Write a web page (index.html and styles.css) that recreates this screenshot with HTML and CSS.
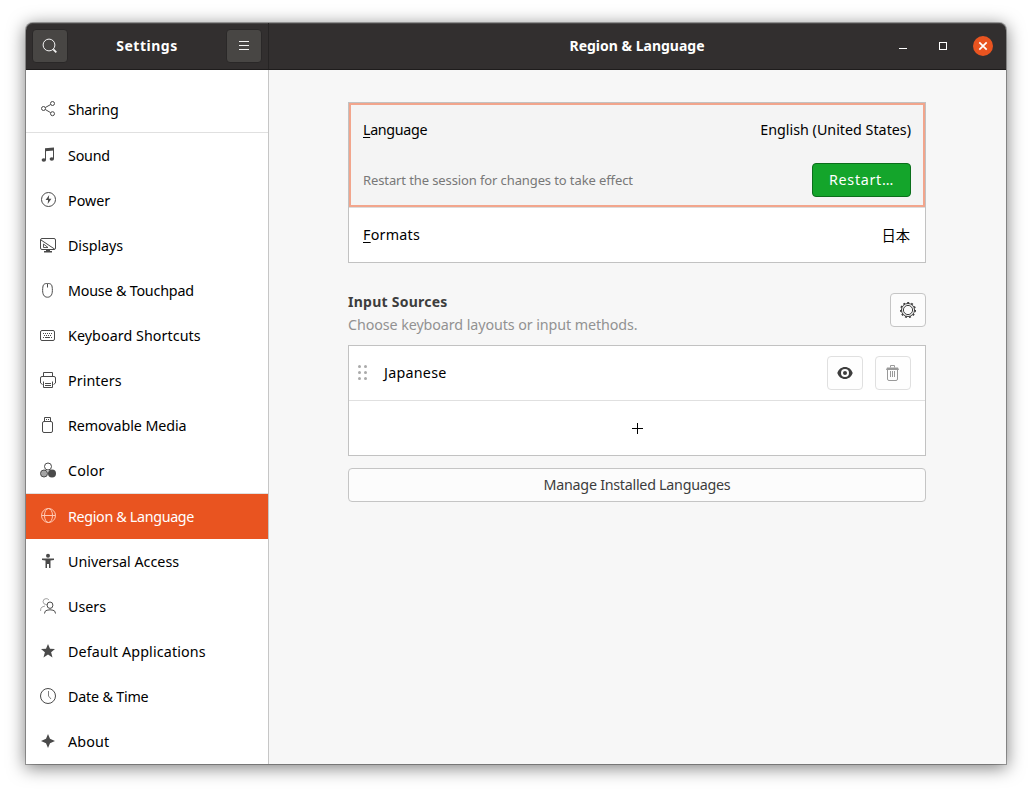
FILE: index.html
```html
<!DOCTYPE html>
<html lang="en">
<head>
<meta charset="utf-8">
<title>Settings</title>
<link rel="stylesheet" href="styles.css">
</head>
<body>
<div class="window">
  <header class="titlebar">
    <div class="titlebar-side">
      <button class="hbtn" aria-label="Search"><svg width="16" height="16" viewBox="0 0 16 16"><circle cx="7" cy="7" r="5.9"/><path d="M11.3 11.3l3 3" stroke-width="1.8"/></svg></button>
      <span class="title title-app">Settings</span>
      <button class="hbtn" aria-label="Menu"><svg width="16" height="16" viewBox="0 0 16 16"><path d="M3 3.5h10M3 7.5h10M3 11.5h10"/></svg></button>
    </div>
    <div class="titlebar-main">
      <span class="title title-page">Region &amp; Language</span>
      <div class="controls">
        <svg width="16" height="16" viewBox="0 0 16 16"><path d="M4 10.5h8"/></svg>
        <svg width="16" height="16" viewBox="0 0 16 16"><rect x="4.500" y="4.500" width="7" height="7"/></svg>
        <svg class="close" width="20" height="20" viewBox="0 0 20 20"><circle cx="10" cy="10" r="10"/><path d="M6.300 6.300l7.400 7.400M13.700 6.300l-7.400 7.400"/></svg>
      </div>
    </div>
  </header>
  <div class="body">
    <nav class="sidebar">
      <a class="item item-sep"><svg class="ico" viewBox="0 0 16 16"><circle cx="12.500" cy="2.500" r="2"/><circle cx="3.500" cy="7.500" r="2"/><circle cx="12.500" cy="12.700" r="2"/><path d="M5.300 6.500l5.400-3M5.300 8.500l5.400 3.200"/></svg><span class="tight">Sharing</span></a>
      <a class="item"><svg class="ico" viewBox="0 0 16 16"><path d="M5.500 13V3M13.500 12V2"/><path class="fill" d="M5 1.300L14 .4v3L5 4.300z"/><ellipse class="fill" cx="3.800" cy="13" rx="2.200" ry="1.800"/><ellipse class="fill" cx="11.800" cy="12" rx="2.200" ry="1.800"/></svg><span class="tight">Sound</span></a>
      <a class="item"><svg class="ico" viewBox="0 0 16 16"><circle cx="8.500" cy="7.500" r="7"/><path class="fill" d="M9.200 3L5.600 8h2.500l-.4 4 3.700-5.200H8.800z"/></svg><span>Power</span></a>
      <a class="item"><svg class="ico" viewBox="0 0 16 16"><rect x=".5" y="1.500" width="15" height="11" rx="1.500"/><path d="M1 3l13.500 9"/><path stroke-width=".9" d="M3.500 7v3.500h4.500z"/><path class="fill" d="M6 12.500h4V14h2v1.500H4V14h2z"/></svg><span class="snug">Displays</span></a>
      <a class="item"><svg class="ico" viewBox="0 0 16 16"><path d="M7.500 1.500c3.500 0 4.500.8 4.800 5 .4 5.500-1 8.700-4.800 8.700s-5.200-3.200-4.800-8.700c.3-4.200 1.300-5 4.800-5zM7.500 2v3.500"/></svg><span class="tight">Mouse &amp; Touchpad</span></a>
      <a class="item"><svg class="ico" viewBox="0 0 16 16"><rect x=".5" y="3.500" width="14" height="10" rx="1.500"/><path d="M3 6.500h1m1 0h1m1 0h1m1 0h1m1 0h1M4 8.500h1m1 0h1m1 0h1m1 0h1M3 10.500h1m1 0h5m1 0h1"/></svg><span class="loose">Keyboard Shortcuts</span></a>
      <a class="item"><svg class="ico" viewBox="0 0 16 16"><path d="M3.500 4V.5h9V4M2.500 12.500L.5 11V6q0-1.500 1.500-1.500h12q1.500 0 1.500 1.500v5l-2 1.500M3.500 9.500v6h9v-6M5 11.500h6M5 13.500h6"/></svg><span class="loose">Printers</span></a>
      <a class="item"><svg class="ico" viewBox="0 0 16 16"><rect x="2.500" y="4.500" width="10" height="11" rx="1.500"/><path d="M4.500 4V.5h6V4M6 2.500h1m1 0h1"/></svg><span class="snug">Removable Media</span></a>
      <a class="item item-sep"><svg class="ico" viewBox="0 0 16 16"><circle cx="8" cy="4.500" r="3.500"/><circle class="half" cx="4" cy="11.500" r="3.500"/><circle class="fill" cx="12" cy="11.500" r="4"/></svg><span class="wide">Color</span></a>
      <a class="item selected"><svg class="ico" viewBox="0 0 16 16"><circle cx="8.500" cy="7.500" r="7"/><ellipse cx="8.500" cy="7.500" rx="4" ry="7"/><path d="M1.500 7.500h14"/></svg><span class="tighter">Region &amp; Language</span></a>
      <a class="item"><svg class="ico" viewBox="0 0 16 16"><circle class="fill" cx="8" cy="2.800" r="2"/><path class="fill" d="M2 5.600h12V7l-3.500.6V15H9v-4H7v4H5.500V7.600L2 7z"/></svg><span>Universal Access</span></a>
      <a class="item"><svg class="ico" viewBox="0 0 16 16"><g opacity=".5"><path d="M7 6.800Q3 6.500 3 3.800 3.200.7 6 .6q2 0 3 1.500M.5 13q0-3 1.500-4l3-1"/></g><ellipse cx="10" cy="7.200" rx="2.900" ry="3.200"/><path d="M4.500 15.500q.2-3 2.500-3.300 3-.8 6 0 2.300.3 2.500 3.300"/></svg><span>Users</span></a>
      <a class="item"><svg class="ico" viewBox="0 0 16 16"><path class="fill" d="M8 1l2 4.800 5 .2-3.900 3.200L12.500 14.500 8 11.500l-4.500 3L4.900 9.200 1 6l5-.2z"/></svg><span class="wide">Default Applications</span></a>
      <a class="item"><svg class="ico" viewBox="0 0 16 16"><circle cx="8" cy="8" r="7.500"/><path opacity=".7" d="M8.500 3v5l2.500 3"/></svg><span class="tight">Date &amp; Time</span></a>
      <a class="item"><svg class="ico" viewBox="0 0 16 16"><path class="fill" d="M8 1l2 4.800 5 2.200-5 2.200-2 4.800-2-4.800L1 8l5-2.200z"/></svg><span class="wide">About</span></a>
    </nav>
    <main class="content">
      <section class="list">
        <div class="focus-row">
          <div class="line"><span class="tighter"><u>L</u>anguage</span><span>English (United States)</span></div>
          <div class="line"><span class="note">Restart the session for changes to take effect</span><button class="restart">Restart…</button></div>
        </div>
        <div class="row formats"><span class="wider"><u>F</u>ormats</span><span class="cjk">日本</span></div>
      </section>
      <section class="sources-head">
        <div>
          <h2>Input Sources</h2>
          <p>Choose keyboard layouts or input methods.</p>
        </div>
        <button class="btn square" aria-label="Options"><svg width="16" height="16" viewBox="0 0 16 16"><circle cx="8" cy="8" r="4.600"/><circle cx="8" cy="8" r="6.500"/><circle class="teeth" cx="8" cy="8" r="7.300"/></svg></button>
      </section>
      <section class="list">
        <div class="row source">
          <svg class="grip" width="10" height="16" viewBox="0 0 10 16"><circle cx="1.500" cy="1.500" r="1.500"/><circle cx="7.500" cy="1.500" r="1.500"/><circle cx="1.500" cy="7.500" r="1.500"/><circle cx="7.500" cy="7.500" r="1.500"/><circle cx="1.500" cy="13.500" r="1.500"/><circle cx="7.500" cy="13.500" r="1.500"/></svg>
          <span class="source-name wider">Japanese</span>
          <button class="btn square light" aria-label="Preview"><svg width="16" height="16" viewBox="0 0 16 16"><path class="eye" fill-rule="evenodd" d="M8 2C4.500 2 1.500 4.200.3 8c1.200 3.800 4.200 6 7.700 6s6.500-2.200 7.700-6C14.500 4.200 11.500 2 8 2zm0 2a4 4 0 1 1 0 8 4 4 0 0 1 0-8zm0 2a2 2 0 1 0 0 4 2 2 0 0 0 0-4z"/></svg></button>
          <button class="btn square light trash" aria-label="Remove"><svg width="16" height="16" viewBox="0 0 16 16"><path d="M5.500 2.500v-2h4v2M2.500 5v9q0 1.500 1.500 1.500h7q1.500 0 1.500-1.500V5M5.500 6v6M7.500 6v6M9.500 6v6"/><path class="lid" d="M2 2.500h11L14 5H1z"/></svg></button>
        </div>
        <div class="row add"><svg width="11" height="11" viewBox="0 0 11 11"><path d="M0 5.500h11M5.500 0v11"/></svg></div>
      </section>
      <button class="btn manage">Manage Installed Languages</button>
    </main>
  </div>
</div>
</body>
</html>
```
FILE: styles.css
```css
* { box-sizing: border-box; }

body {
  margin: 0;
  padding: 23px 26px 0;
  height: 793px;
  overflow: hidden;
  background: #fff;
  color: #000;
  font: 14.3px/20px "Noto Sans", "Noto Sans CJK JP", sans-serif;
}

button { font: inherit; margin: 0; padding: 0; }
svg { display: block; fill: none; stroke: currentColor; }

/* Tracking steps */
.tighter { letter-spacing: -.33px; }
.tight { letter-spacing: -.2px; }
.snug { letter-spacing: -.08px; }
.loose { letter-spacing: .06px; }
.wide { letter-spacing: .14px; }
.wider { letter-spacing: .25px; }

.window {
  width: 980px;
  height: 741px;
  border-radius: 7px 7px 0 0;
  background: #f7f7f7;
  box-shadow: 0 0 0 1px rgba(0, 0, 0, .3), 0 3px 17px 1px rgba(0, 0, 0, .5);
}

.titlebar {
  display: flex;
  height: 47px;
  border-radius: 7px 7px 0 0;
  border-bottom: 1px solid #1e1c1c;
  background: #322f2f;
  box-shadow: inset 0 1px #4a4848;
  color: #fff;
}
.titlebar-side {
  display: flex;
  align-items: center;
  justify-content: space-between;
  width: 243px;
  padding: 0 6px;
  border-right: 1px solid #262424;
}
.hbtn {
  display: grid;
  place-items: center;
  width: 36px;
  height: 34px;
  border: 1px solid #2a2828;
  border-radius: 4px;
  background: #484644;
  color: #f2f2f2;
}
.title { font-weight: 700; font-size: 14px; }
.title-app { letter-spacing: .5px; }
.titlebar-main {
  flex: 1;
  display: grid;
  grid-template-columns: 1fr auto 1fr;
  align-items: center;
  padding: 0 13px 0 12px;
}
.title-page { grid-column: 2; }
.controls {
  grid-column: 3;
  display: flex;
  justify-content: flex-end;
  align-items: center;
  gap: 24px;
}
.controls .close { margin-left: -2px; stroke-width: 1.7; }
.close circle { fill: #e95420; stroke: none; }

.body { display: flex; height: 694px; }
.sidebar {
  width: 243px;
  padding-top: 17px;
  border-right: 1px solid #c6c6c6;
  background: #fff;
}
.item {
  display: flex;
  align-items: flex-start;
  gap: 12px;
  height: 45px;
  padding: 13px 0 0 14px;
}
.item span { white-space: nowrap; }
.item-sep { height: 46px; border-bottom: 1px solid #e0e0e0; }
.selected { background: #e95420; color: #fff; }
.ico { width: 16px; height: 16px; margin-top: 1px; color: #4a4a4a; }
.selected .ico { color: #ffc9b4; }
.fill { fill: currentColor; stroke: none; }
.half { fill: #a5a5a5; }

.content {
  flex: 1;
  padding: 32px 80px 0 79px;
}
.list { border: 1px solid #c2c2c2; background: #fff; }
.focus-row {
  height: 104px;
  border: 2px solid #f2a58c;
  background: #f4f4f4;
  padding: 0 12px;
}
.line {
  display: flex;
  align-items: center;
  justify-content: space-between;
  height: 50px;
}
.note { color: #787878; font-size: 13px; letter-spacing: -.11px; }
u { text-underline-offset: 2px; }
.restart {
  width: 99px;
  height: 34px;
  border: 1px solid #0b6e1b;
  border-radius: 4px;
  background: #14a52b;
  color: #fff;
  letter-spacing: .7px;
}
.row { display: flex; align-items: center; }
.formats {
  justify-content: space-between;
  height: 55px;
  padding: 0 14px;
  border-top: 1px solid #dcdcdc;
}
.cjk { padding: 2px 1px 0 0; }
.sources-head {
  display: flex;
  justify-content: space-between;
  align-items: center;
  height: 82px;
  padding-top: 12px;
}
h2 { margin: 0; padding-top: 5px; font-size: 14px; line-height: 23px; color: #3d3d3d; letter-spacing: .25px; }
p { margin: 0; line-height: 23px; color: #929292; letter-spacing: -.09px; }
.btn {
  display: grid;
  place-items: center;
  border: 1px solid #c5c5c5;
  border-radius: 4px;
  background: #fcfcfc;
  color: #3d3d3d;
}
.square { width: 36px; height: 34px; }
.light { border-color: #e0e0e0; background: #fefefe; }
.teeth { stroke-width: 1.4; stroke-dasharray: 2 2.170; }
.source {
  height: 55px;
  padding: 0 14px 0 9px;
  gap: 12px;
  border-bottom: 1px solid #e0e0e0;
}
.grip { fill: #aaa; stroke: none; }
.source-name { flex: 1; padding-left: 4px; }
.eye { fill: currentColor; stroke: none; }
.trash { color: #999; }
.lid { fill: currentColor; stroke: none; }
.add { justify-content: center; height: 54px; }
.manage { width: 100%; height: 34px; margin-top: 12px; letter-spacing: -.27px; }
```
